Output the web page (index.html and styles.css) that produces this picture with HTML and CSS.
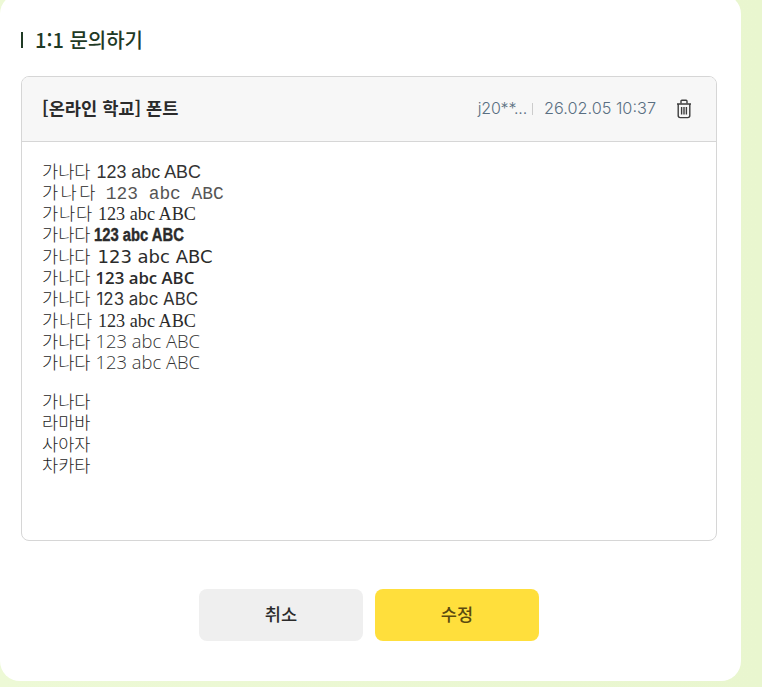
FILE: index.html
```html
<!DOCTYPE html>
<html lang="ko">
<head>
<meta charset="utf-8">
<title>1:1 문의하기</title>
<link rel="stylesheet" href="styles.css">
</head>
<body>
<main class="card">
  <h2 class="title">1:1 문의하기</h2>
  <section class="box">
    <header class="box-head">
      <strong class="subject">[온라인 학교] 폰트</strong>
      <div class="meta">
        <span class="author">j20**...</span>
        <span class="sep"></span>
        <span class="date">26.02.05 10:37</span>
        <svg class="trash" width="16" height="20" viewBox="0 0 16 20" fill="none" stroke="#3c3c3c" stroke-width="1.4">
          <path d="M1 5h14"/>
          <path d="M5 4.5V2.2q0-.9.9-.9h4.2q.9 0 .9.9v2.3"/>
          <path d="M2.2 5v11.6q0 2 2 2h7.6q2 0 2-2V5"/>
          <path d="M5.6 8v7.5M8 8v7.5M10.4 8v7.5" stroke-width="1.4"/>
        </svg>
      </div>
    </header>
    <div class="body">
      <p class="ln"><span class="ko">가나다</span> <span class="f1">123 abc ABC</span></p>
      <p class="ln"><span class="ko wide">가나다</span> <span class="f2">123 abc ABC</span></p>
      <p class="ln"><span class="ko mid">가나다</span> <span class="f3">123 abc ABC</span></p>
      <p class="ln"><span class="ko">가나다</span> <span class="f4">123 abc ABC</span></p>
      <p class="ln"><span class="ko">가나다</span> <span class="f5">123 abc ABC</span></p>
      <p class="ln"><span class="ko">가나다</span> <span class="f6">123 abc ABC</span></p>
      <p class="ln"><span class="ko">가나다</span> <span class="f7">123 abc ABC</span></p>
      <p class="ln"><span class="ko mid">가나다</span> <span class="f3">123 abc ABC</span></p>
      <p class="ln"><span class="ko">가나다</span> <span class="f8">123 abc ABC</span></p>
      <p class="ln"><span class="ko">가나다</span> <span class="f8">123 abc ABC</span></p>
      <p class="ln blank">&nbsp;</p>
      <p class="ln ko">가나다</p>
      <p class="ln ko">라마바</p>
      <p class="ln ko">사아자</p>
      <p class="ln ko">차카타</p>
    </div>
  </section>
  <div class="actions">
    <button class="btn cancel" type="button">취소</button>
    <button class="btn save" type="button">수정</button>
  </div>
</main>
</body>
</html>
```
FILE: styles.css
```css
* { box-sizing: border-box; }
html, body { height: 100%; }
body {
  margin: 0;
  overflow: hidden;
  background: linear-gradient(90deg, #edf9d6, #e9f6cf);
  font-family: "Noto Sans CJK KR", "Noto Sans", sans-serif;
  color: #2b2b2b;
}
.card {
  width: 741px;
  height: 687px;
  margin-top: -6px;
  padding: 6px 24px 0 21px;
  background: #fff;
  border-radius: 20px;
  display: flex;
  flex-direction: column;
}
.title {
  margin: 30px 0 0;
  height: 18px;
  display: flex;
  align-items: center;
  gap: 12px;
  font-size: 20px;
  font-weight: 500;
  color: #1f3a25;
}
.title::before {
  content: "";
  width: 2px;
  height: 16px;
  margin-top: 2px;
  background: #1f3a25;
}
.box {
  margin-top: 28px;
  height: 465px;
  border: 1px solid #d6d6d6;
  border-radius: 8px;
  overflow: hidden;
}
.box-head {
  height: 65px;
  padding: 0 24px 0 20px;
  display: flex;
  align-items: center;
  justify-content: space-between;
  background: #f7f7f7;
  border-bottom: 1px solid #d6d6d6;
}
.subject { font-size: 17.6px; font-weight: 700; color: #2b2b2b; margin-bottom: 4px; }
.meta {
  display: flex;
  align-items: center;
  font-size: 16px;
  font-weight: 300;
  color: #5a6f82;
  font-family: "Inter", "Noto Sans CJK KR", sans-serif;
}
.author { letter-spacing: -0.2px; margin-bottom: 2px; }
.date { font-size: 16.3px; margin-bottom: 2px; }
.sep { width: 1px; height: 12px; background: #ccc; margin: 0 11px 0 5px; }
.trash { margin-left: 20px; }
.body { padding: 17.5px 20px; }
.ln {
  margin: 0;
  height: 21.3px;
  line-height: 21.3px;
  font-size: 17.6px;
  color: #2b2b2b;
  white-space: pre;
}
.ko { font-weight: 300; color: #1d1d1d; }
.wide { letter-spacing: 2.4px; }
.mid { letter-spacing: 0.8px; }
.blank { height: 17.5px; }
.f1 { font-family: "Liberation Sans", sans-serif; font-size: 17.9px; margin-left: 1px; color: #333; }
.f2 { font-family: "Liberation Mono", monospace; font-size: 17.9px; color: #555; margin-left: 3px; }
.f3 { font-family: "Liberation Serif", serif; font-size: 18.2px; }
.f4 {
  display: inline-block;
  margin-left: -2px;
  font-family: "Liberation Sans", sans-serif;
  font-weight: 700;
  transform: scaleX(0.84);
  transform-origin: left center;
  -webkit-text-stroke: 0.4px #2b2b2b;
}
.f5 { font-family: "DejaVu Sans", sans-serif; font-size: 18px; margin-left: 2px; }
.f6 { font-family: "Open Sans", sans-serif; font-weight: 600; font-size: 16.8px; }
.f7 { font-family: "Inter", sans-serif; font-size: 16.9px; margin-left: 1px; color: #333; }
.f8 { font-family: "Open Sans", sans-serif; font-weight: 300; font-size: 18.4px; color: #333; }
.actions {
  margin-top: 48px;
  display: flex;
  justify-content: center;
  gap: 12px;
}
.btn {
  width: 164px;
  height: 52px;
  border: 0;
  padding: 0 0 3px;
  border-radius: 8px;
  font: 500 17.6px "Noto Sans CJK KR", sans-serif;
}
.cancel { background: #efefef; color: #2b2b2b; }
.save { background: #ffdf3c; color: #5a4a10; }
```
